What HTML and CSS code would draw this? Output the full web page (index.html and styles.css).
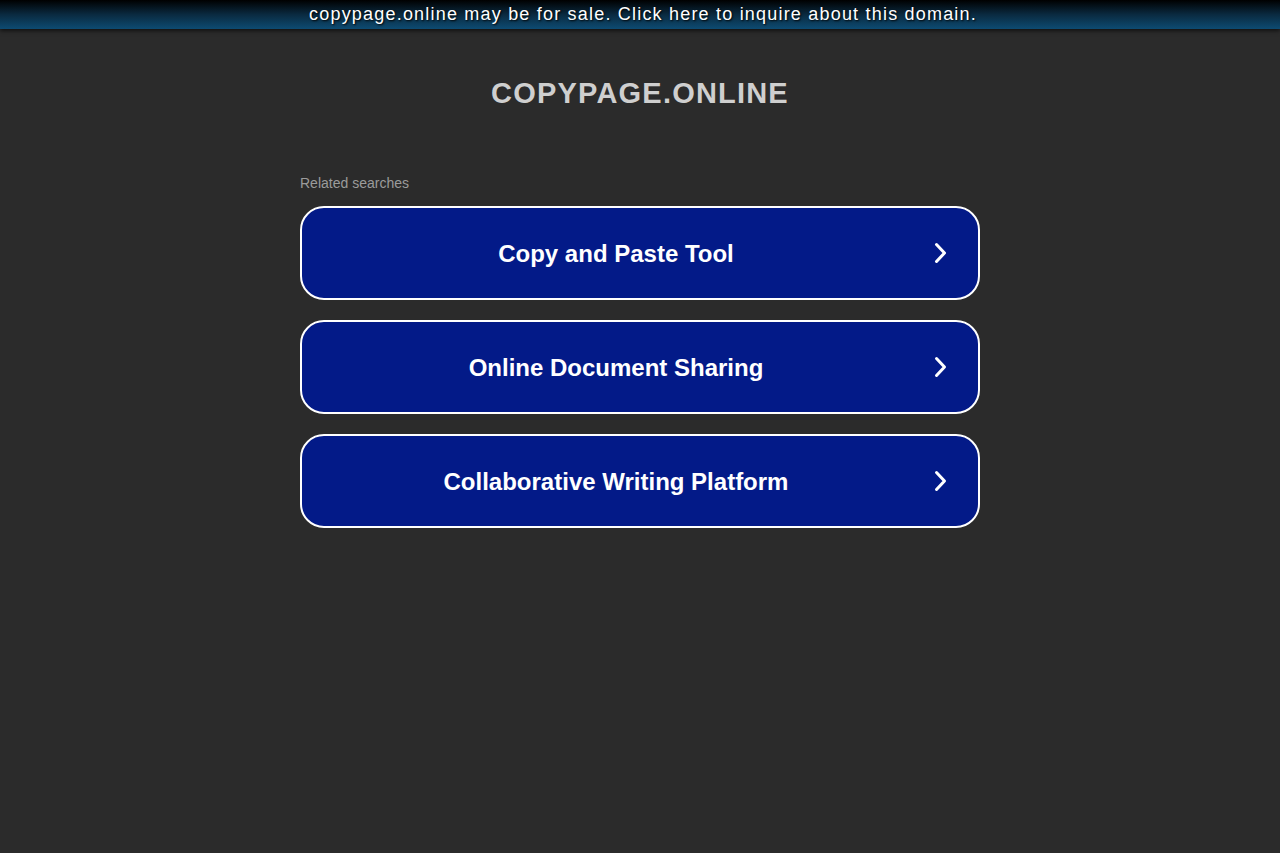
FILE: index.html
```html
<!DOCTYPE html>
<html>
<head>
<meta charset="utf-8">
<link rel="stylesheet" href="styles.css">
</head>
<body>
<div class="topbar"><a class="topbar-link" href="#">copypage.online may be for sale. Click here to inquire about this domain.</a></div>
<h1 class="title">COPYPAGE.ONLINE</h1>
<div class="content">
  <div class="label">Related searches</div>
  <div class="list">
    <a class="item" href="#"><span class="item-text">Copy and Paste Tool</span><svg class="chev" viewBox="0 0 16 24" width="16" height="24"><path d="M4.5 3.5 L12.5 12 L4.5 20.5" fill="none" stroke="#fff" stroke-width="3" stroke-linecap="round" stroke-linejoin="round"/></svg></a>
    <a class="item" href="#"><span class="item-text">Online Document Sharing</span><svg class="chev" viewBox="0 0 16 24" width="16" height="24"><path d="M4.5 3.5 L12.5 12 L4.5 20.5" fill="none" stroke="#fff" stroke-width="3" stroke-linecap="round" stroke-linejoin="round"/></svg></a>
    <a class="item" href="#"><span class="item-text">Collaborative Writing Platform</span><svg class="chev" viewBox="0 0 16 24" width="16" height="24"><path d="M4.5 3.5 L12.5 12 L4.5 20.5" fill="none" stroke="#fff" stroke-width="3" stroke-linecap="round" stroke-linejoin="round"/></svg></a>
  </div>
</div>
</body>
</html>
```
FILE: styles.css
```css
html, body {
  margin: 0;
  padding: 0;
  background: #2b2b2b;
  font-family: "Liberation Sans", Arial, sans-serif;
}
.topbar {
  height: 29px;
  background: linear-gradient(to bottom, #000 0%, #0a2a40 50%, #0d4b72 100%);
  box-shadow: 0 2px 4px rgba(0,0,0,0.6);
  display: flex;
  justify-content: center;
  align-items: center;
  padding-left: 6px;
}
.topbar-link {
  color: #fff;
  text-decoration: none;
  font-size: 18px;
  letter-spacing: 1.2px;
  text-shadow: 1px 1px 2px #000;
  line-height: 29px;
}
.title {
  margin: 47px 0 0;
  text-align: center;
  font-size: 29px;
  font-weight: bold;
  color: #cfcfcf;
  letter-spacing: 1.2px;
  line-height: 34px;
}
.content {
  width: 680px;
  margin: 65px auto 0;
}
.label {
  font-size: 14px;
  color: #9b9b9b;
  line-height: 16px;
  margin-bottom: 15px;
}
.list {
  display: flex;
  flex-direction: column;
  gap: 20px;
}
.item {
  box-sizing: border-box;
  height: 94px;
  border: 2px solid #fff;
  border-radius: 24px;
  background: #031a88;
  display: flex;
  align-items: center;
  padding: 0 30px 0 0;
  text-decoration: none;
}
.item-text {
  flex: 1;
  text-align: center;
  color: #fff;
  font-size: 24px;
  font-weight: bold;
  padding: 2px 2px 0 0;
}
.chev {
  flex: none;
}
```
